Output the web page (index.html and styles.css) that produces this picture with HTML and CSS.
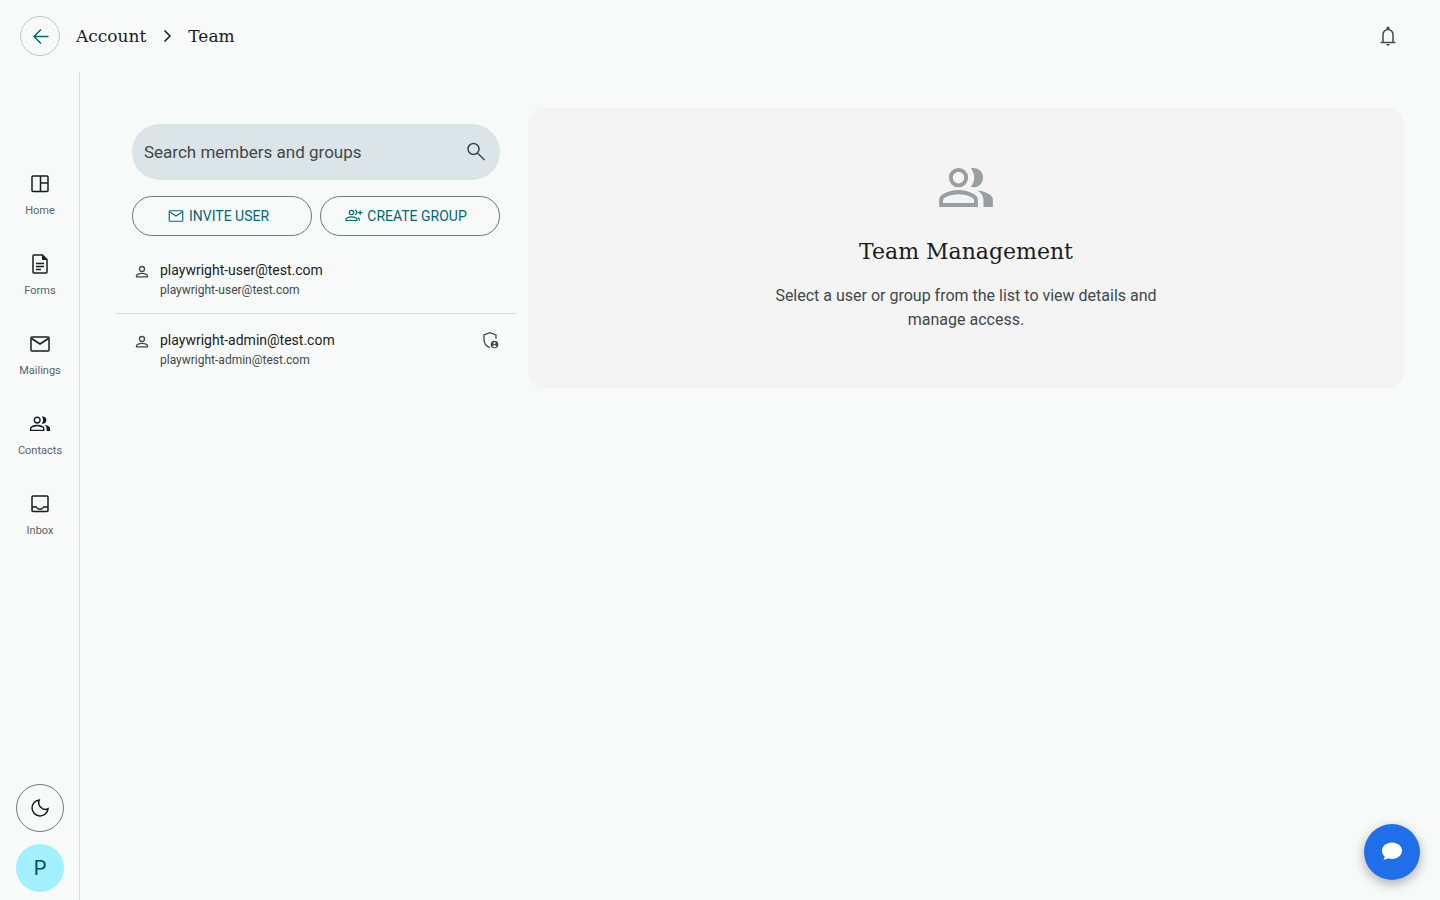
FILE: index.html
```html
<!DOCTYPE html>
<html lang="en">
	<head>
		<meta charset="utf-8">
		<meta name="viewport" content="width=device-width, initial-scale=1">
		<title>Team</title>
		<link rel="stylesheet" href="styles.css">
	</head>
	<body>
		<svg width="0" height="0" class="sprite">
			<symbol id="people" viewBox="-32 -984 1024 1024">
				<path d="M50-170v-102q0-34 17.5-62.5T114-378q62-31 121-46.500T360-440q66 0 125 15.500T606-378q29 15 46.500 43.500T670-272v102H50Zm710 0v-110q0-44-24.500-84.500T666-434q51 6 96 20.500t84 35.500q36 20 50 44.500t14 53.500v110H760ZM360-485q-66 0-110-45t-44-110q0-66 44-110t110-44q66 0 110 44t44 110q0 65-44 110t-110 45Zm394-155q0 65-44 110t-110 45q-8 0-22-2.500t-22-5.500q27-32 41.500-70t14.500-77q0-40-14.500-77T556-787q11-4 22-5.500t22-1.500q66 0 110 44t44 110ZM112-232h496v-40q0-14-7-26t-21-20q-54-27-109-40.500T360-372q-56 0-111 13.500T140-318q-14 8-21 20t-7 26v40Zm248-314q38 0 65-28t27-66q0-38-27-65t-65-27q-38 0-65 27t-27 65q0 38 27 66t65 28Z"/>
			</symbol>
			<symbol id="person" viewBox="0 0 20 20">
				<circle cx="10" cy="7" r="2.5"/>
				<path d="M4.500 14.900v-.8c0-.9.5-1.400 1.200-1.700 2.700-1.300 5.900-1.300 8.600 0 .7.300 1.200.8 1.200 1.700v.8z"/>
			</symbol>
			<symbol id="mail" viewBox="0 0 24 24">
				<rect x="3" y="5" width="18" height="14" rx="1"/>
				<path d="M3.500 6.500 12 12l8.500-5.500"/>
			</symbol>
		</svg>

		<header class="topbar">
			<button class="back" type="button" aria-label="Back">
				<svg class="icon line" viewBox="0 0 24 24"><path d="M20.500 12.500H6M13 5.500l-7 7 7 7"/></svg>
			</button>
			<nav class="crumbs" aria-label="Breadcrumb">
				<a href="#account">Account</a>
				<svg class="icon line" viewBox="0 0 24 24"><path d="m9.500 6.500 5.500 5.500-5.500 5.500"/></svg>
				<a href="#team">Team</a>
			</nav>
			<button class="bell" type="button" aria-label="Notifications">
				<svg class="icon line" viewBox="0 0 24 24">
					<path d="M4.500 18.500h15M7 18v-7.500a5 5 0 0 1 10 0V18M12 5V3.500"/>
					<path class="solid" d="M10.500 4a1.500 1.500 0 0 1 3 0v1h-3zM10.300 20h3.400a1.700 1.700 0 0 1-3.400 0z"/>
				</svg>
			</button>
		</header>

		<div class="layout">
			<aside class="sidebar">
				<nav class="menu">
					<a href="#home">
						<svg class="icon line" viewBox="0 0 24 24"><rect x="4" y="4" width="16" height="15.500" rx="1"/><path d="M12.500 4v15.500M12.500 11H20"/></svg>
						<span>Home</span>
					</a>
					<a href="#forms">
						<svg class="icon line" viewBox="0 0 24 24">
							<path d="M6 3h8.500L19 7.500V20a1 1 0 0 1-1 1H6a1 1 0 0 1-1-1V4a1 1 0 0 1 1-1zM8 11.500h8M8 14.500h8M8 17.500h5"/>
							<path class="solid" d="M14 3v5h5z"/>
						</svg>
						<span>Forms</span>
					</a>
					<a href="#mailings">
						<svg class="icon line"><use href="#mail"/></svg>
						<span>Mailings</span>
					</a>
					<a href="#contacts">
						<svg class="icon"><use href="#people"/></svg>
						<span>Contacts</span>
					</a>
					<a href="#inbox">
						<svg class="icon line" viewBox="0 0 24 24"><rect x="4" y="4" width="16" height="15.500" rx="1"/><path d="M4 15h4.300c1.700 3 5.700 3 7.400 0H20"/></svg>
						<span>Inbox</span>
					</a>
				</nav>
				<div class="profile">
					<button class="theme" type="button" aria-label="Dark mode">
						<svg class="icon line" viewBox="0 0 24 24"><path d="M11.200 4A8 8 0 1 0 20 12.800C15 15 9 10 11.200 4z"/></svg>
					</button>
					<button class="avatar" type="button">P</button>
				</div>
			</aside>

			<main class="content">
				<section class="members">
					<div class="tools">
						<label class="search">
							<input type="search" placeholder="Search members and groups" aria-label="Search members and groups">
							<svg class="icon line" viewBox="0 0 24 24"><circle cx="9.500" cy="9" r="5.500"/><path d="m13.500 13 7 7"/></svg>
						</label>
						<div class="actions">
							<button type="button">
								<svg class="small-icon line"><use href="#mail"/></svg>
								INVITE USER
							</button>
							<button type="button">
								<svg class="small-icon group-add line" viewBox="0 0 18 18">
									<circle cx="6.500" cy="5.500" r="2.200"/>
									<path d="M1 13.500v-1c0-.8.4-1.200 1-1.500 2.800-1.400 6.200-1.400 9 0 .6.300 1 .7 1 1.500v1zM10 3.300c2.300-.2 2.800 3.800 0 4.400M13 10.500c1 .7 1.500 1.400 1.500 3.300M15.200 3.500v4.400M13 5.700h4.400"/>
								</svg>
								CREATE GROUP
							</button>
						</div>
					</div>
					<ul class="list">
						<li>
							<svg class="person line"><use href="#person"/></svg>
							<a href="#user">
								<strong>playwright-user@test.com</strong>
								<span>playwright-user@test.com</span>
							</a>
						</li>
						<li>
							<svg class="person line"><use href="#person"/></svg>
							<a href="#admin">
								<strong>playwright-admin@test.com</strong>
								<span>playwright-admin@test.com</span>
							</a>
							<svg class="shield line" viewBox="0 0 20 20">
								<path d="M10 17.700C6.500 16.500 4 13.300 4 9V4.900L10 2.700l6 2.200v3.900"/>
								<circle class="solid" cx="14.500" cy="14.500" r="3.800"/>
								<circle class="cut" cx="14.500" cy="13.200" r="1.100"/>
								<path class="cut" d="M12.300 16.300c1-1.300 3.400-1.300 4.400 0-1.200 1.200-3.200 1.200-4.400 0z"/>
							</svg>
						</li>
					</ul>
				</section>
				<section class="panel">
					<svg class="hero"><use href="#people"/></svg>
					<h1>Team Management</h1>
					<p>Select a user or group from the list to view details and manage access.</p>
				</section>
			</main>
		</div>

		<button class="chat" type="button" aria-label="Chat">
			<svg class="icon" viewBox="0 0 24 24"><path d="M12 2.500c5.600 0 10 3.600 10 8.200s-4.400 8.200-10 8.200c-1.400 0-2.700-.2-3.900-.6-1.200.8-2.800 1.300-4.700 1.300.8-.8 1.300-1.900 1.400-3C3.100 15.100 2 13 2 10.700c0-4.600 4.400-8.200 10-8.200z"/></svg>
		</button>
	</body>
</html>
```

FILE: styles.css
```css
* {
	box-sizing: border-box;
}
body {
	display: flex;
	flex-direction: column;
	min-height: 100vh;
	margin: 0;
	background-color: #f8faf9;
	color: #191c1d;
	font-family: Roboto, "Liberation Sans", sans-serif;
	font-size: 14px;
}
a {
	color: inherit;
	text-decoration: none;
}
button {
	display: flex;
	align-items: center;
	justify-content: center;
	padding: 0;
	border: 0;
	background: none;
	color: inherit;
	font: inherit;
	cursor: pointer;
}
svg {
	flex: none;
	fill: currentColor;
}
.sprite {
	position: absolute;
}
.icon {
	width: 24px;
	height: 24px;
}
.small-icon {
	width: 18px;
	height: 18px;
}
.line {
	fill: none;
	stroke: currentColor;
	stroke-width: 1.5;
}
.group-add {
	stroke-width: 1.2;
}
.solid {
	fill: currentColor;
	stroke: none;
}
.cut {
	fill: #f8faf9;
	stroke: none;
}

/* top bar */
.topbar {
	display: flex;
	align-items: center;
	height: 72px;
	padding: 0 40px 0 20px;
}
.back {
	width: 40px;
	height: 40px;
	border: 1px solid #bfc8ca;
	border-radius: 50%;
	color: #006876;
}
.crumbs {
	display: flex;
	align-items: center;
	gap: 9px;
	margin-left: 16px;
	font-family: "Roboto Slab", "DejaVu Serif", serif;
	font-size: 17px;
	font-weight: 300;
}
.bell {
	margin-left: auto;
	color: #3f484a;
}

/* sidebar */
.layout {
	display: flex;
	flex: 1;
}
.sidebar {
	display: flex;
	flex-direction: column;
	justify-content: space-between;
	width: 80px;
	padding: 100px 0 8px;
	box-shadow: inset -1px 0 #d9dcdc;
}
.menu {
	display: flex;
	flex-direction: column;
	gap: 34px;
}
.menu a {
	display: flex;
	flex-direction: column;
	align-items: center;
	gap: 8px;
}
.menu span {
	color: #5b6364;
	font-size: 11px;
	line-height: 14px;
}
.profile {
	display: flex;
	flex-direction: column;
	align-items: center;
	gap: 12px;
}
.theme, .avatar {
	width: 48px;
	height: 48px;
	border-radius: 50%;
}
.theme {
	border: 1px solid #6f797a;
}
.avatar {
	background-color: #a1efff;
	color: #004e59;
	font-size: 20px;
}

/* members */
.content {
	display: flex;
	flex: 1;
	align-items: flex-start;
	gap: 12px;
	padding: 36px;
}
.members {
	flex: none;
	width: 400px;
}
.tools {
	padding: 16px 16px 8px;
}
.search {
	display: flex;
	align-items: center;
	height: 56px;
	padding: 0 12px;
	border-radius: 28px;
	background-color: #dbe4e6;
	color: #3f484a;
}
.search input {
	flex: 1;
	min-width: 0;
	padding: 0;
	border: 0;
	outline: 0;
	background: none;
	color: inherit;
	font: inherit;
	font-size: 17px;
}
.search input::placeholder {
	color: #3f484a;
}
.actions {
	display: flex;
	gap: 8px;
	margin-top: 16px;
}
.actions button {
	flex: 1;
	gap: 4px;
	height: 40px;
	padding-right: 8px;
	border: 1px solid #6f797a;
	border-radius: 20px;
	color: #006876;
}
.list {
	margin: 0;
	padding: 0;
	list-style: none;
}
.list li {
	display: flex;
	gap: 8px;
	padding: 16px 16px 13px;
	border-bottom: 1px solid #d9dcdc;
}
.list li:last-child {
	border-bottom: 0;
}
.list a {
	flex: 1;
}
.list strong, .list span {
	display: block;
	font-weight: 400;
	line-height: 20px;
}
.list span {
	color: #3f484a;
	font-size: 12px;
}
.person, .shield {
	width: 20px;
	height: 20px;
	color: #3f484a;
	stroke-width: 1.3;
}
.person {
	margin-top: 2px;
}

/* right panel */
.panel {
	display: flex;
	flex: 1;
	flex-direction: column;
	align-items: center;
	padding: 48px 48px 56px;
	border-radius: 16px;
	background-color: #f4f4f4;
	text-align: center;
}
.hero {
	width: 64px;
	height: 64px;
	color: #999e9e;
}
.panel h1 {
	margin: 16px 0;
	font-family: "Roboto Slab", "DejaVu Serif", serif;
	font-size: 22px;
	font-weight: 300;
	line-height: 32px;
}
.panel p {
	max-width: 400px;
	margin: 0;
	color: #3f484a;
	font-size: 16px;
	line-height: 24px;
}

.chat {
	position: fixed;
	right: 20px;
	bottom: 20px;
	width: 56px;
	height: 56px;
	border-radius: 50%;
	background-color: #1f6feb;
	box-shadow: 0 4px 12px rgba(0, 0, 0, 0.3);
	color: #fff;
}
```
